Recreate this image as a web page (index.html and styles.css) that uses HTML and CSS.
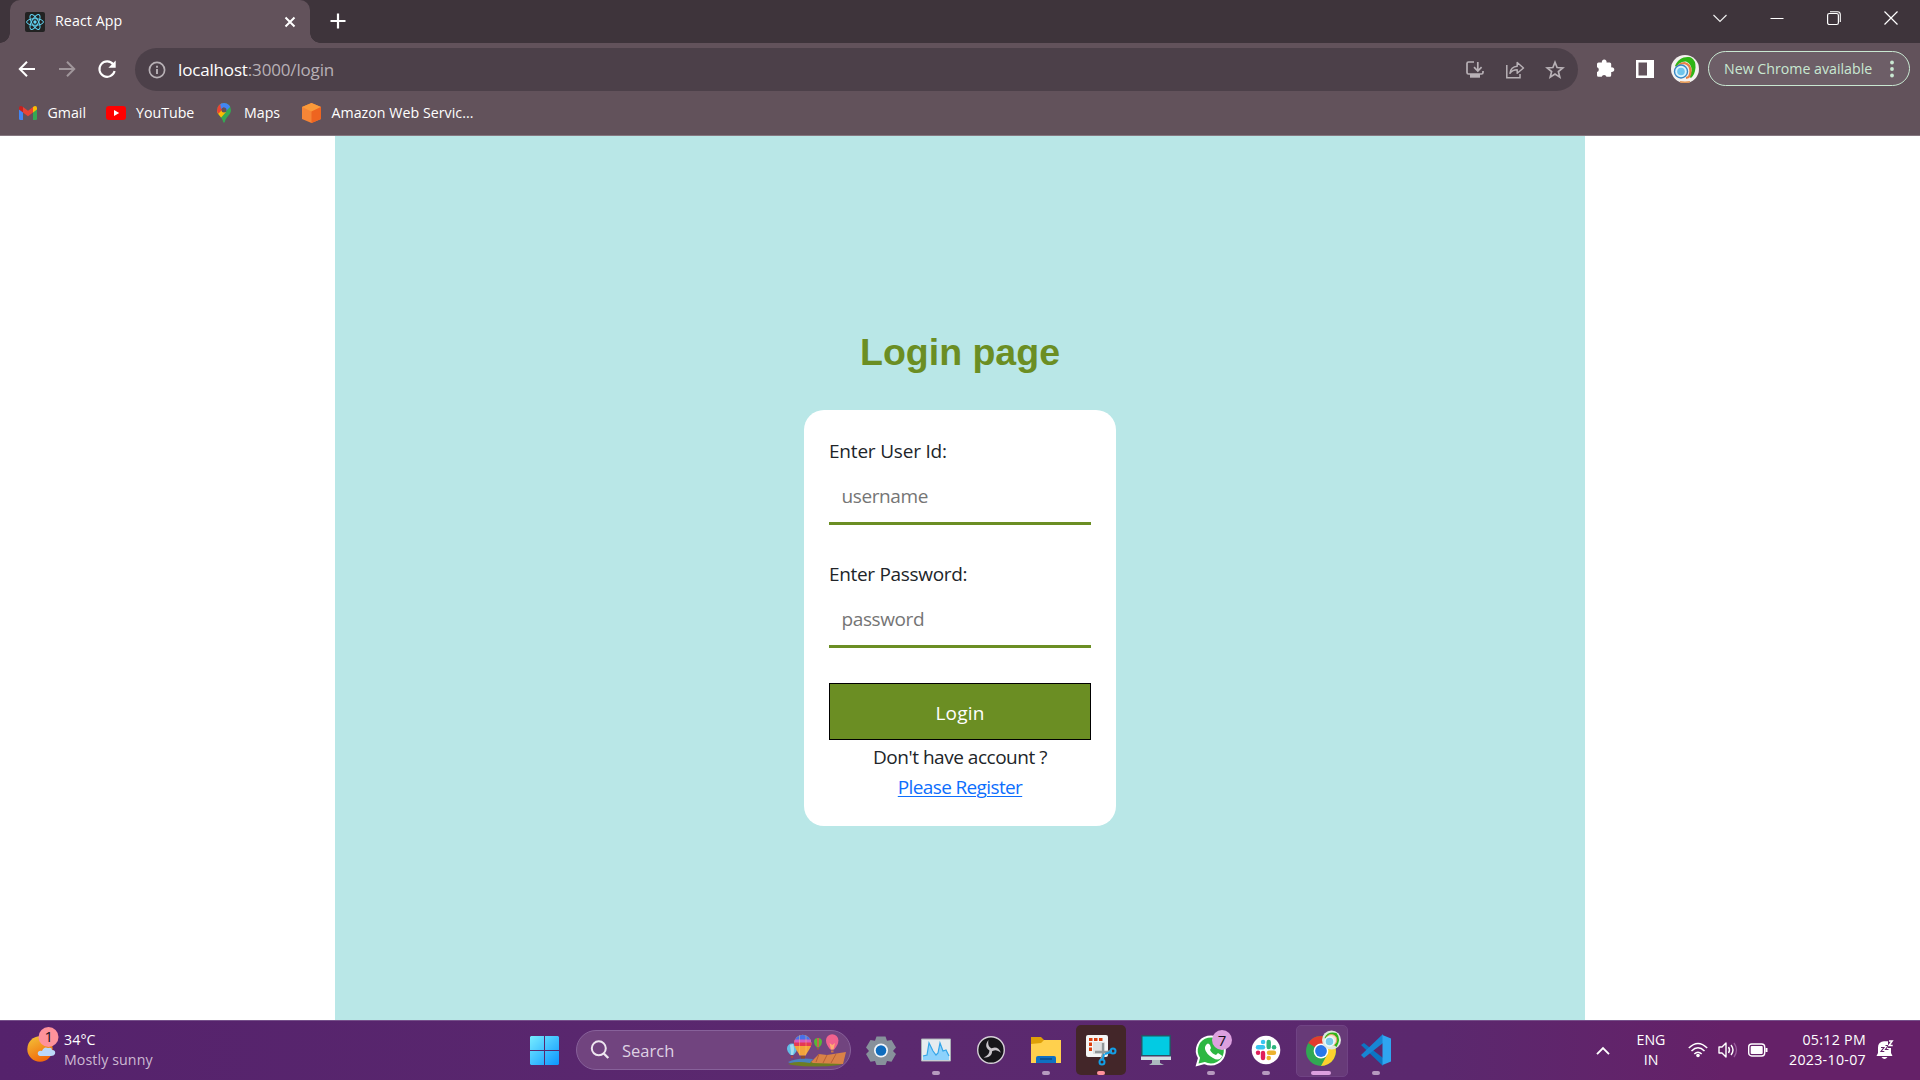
FILE: index.html
```html
<!DOCTYPE html>
<html lang="en">
<head>
<meta charset="utf-8">
<title>React App</title>
<link rel="stylesheet" href="styles.css">
</head>
<body>
<div class="screen">
  <header class="browser">
    <div class="tabstrip">
      <div class="tab">
        <svg class="favicon" width="20" height="20" viewBox="0 0 20 20"><rect width="20" height="20" rx="2" fill="#222"/><g fill="none" stroke="#5fd3f3" stroke-width="1"><ellipse cx="10" cy="10" rx="8.4" ry="3.3"/><ellipse cx="10" cy="10" rx="8.4" ry="3.3" transform="rotate(60 10 10)"/><ellipse cx="10" cy="10" rx="8.4" ry="3.3" transform="rotate(120 10 10)"/></g><circle cx="10" cy="10" r="1.7" fill="#5fd3f3"/></svg>
        <span class="tab-title">React App</span>
        <svg class="tab-close" width="12" height="12" viewBox="0 0 12 12"><path d="M1.5 1.5l9 9M10.500 1.500l-9 9" stroke="#fff" stroke-width="2"/></svg>
      </div>
      <svg class="new-tab" width="16" height="16" viewBox="0 0 16 16"><path d="M8 .5v15M.5 8h15" stroke="#fff" stroke-width="2.200"/></svg>
      <div class="window-controls">
        <svg width="14" height="14" viewBox="0 0 14 14"><path d="M.5 4l6.500 6.500L13.500 4" fill="none" stroke="#eee" stroke-width="1.200"/></svg>
        <svg width="14" height="14" viewBox="0 0 14 14"><path d="M.5 7.500h13" stroke="#fff"/></svg>
        <svg width="14" height="14" viewBox="0 0 14 14"><rect x=".6" y="2.500" width="10.800" height="11" rx="1.800" fill="none" stroke="#fff" stroke-width="1.200"/><path d="M3 .7h7.500a2.800 2.800 0 0 1 2.800 2.800V11" fill="none" stroke="#fff" stroke-width="1.100"/></svg>
        <svg width="14" height="14" viewBox="0 0 14 14"><path d="M.5.5l13 13M13.500.5l-13 13" stroke="#fff" stroke-width="1.200"/></svg>
      </div>
    </div>
    <div class="toolbar">
      <div class="nav">
        <svg width="20" height="20" viewBox="0 0 20 20"><path d="M18 10H3M10 2.800L2.800 10l7.200 7.200" fill="none" stroke="#fff" stroke-width="2"/></svg>
        <svg width="20" height="20" viewBox="0 0 20 20"><path d="M2 10h15M10 2.800l7.200 7.200-7.200 7.200" fill="none" stroke="#a0969b" stroke-width="2"/></svg>
        <svg width="20" height="20" viewBox="0 0 20 20"><path d="M16.300 5.500A7.700 7.700 0 1 0 17.600 12" fill="none" stroke="#fff" stroke-width="2.100"/><path d="M18.700 1.500v7.300h-7.300z" fill="#fff"/></svg>
      </div>
      <div class="omnibox">
        <svg width="18" height="18" viewBox="0 0 18 18"><circle cx="9" cy="9" r="7.600" fill="none" stroke="#b8b1b6" stroke-width="1.700"/><path d="M9 8v5M9 4.800v1.900" stroke="#b8b1b6" stroke-width="1.900"/></svg>
        <span class="url"><b>localhost</b>:3000/login</span>
        <div class="omni-actions">
          <svg width="20" height="20" viewBox="0 0 20 20"><path d="M9 2H3.500Q2 2 2 3.500v9Q2 14 3.500 14h13q1.500 0 1.500-1.500V11M12.800 2v8.500M9 7.200l3.800 3.800 3.800-3.800" fill="none" stroke="#b8b1b6" stroke-width="1.700"/><path d="M5 14h10v3.700H5z" fill="#b8b1b6"/></svg>
          <svg width="20" height="20" viewBox="0 0 20 20"><path d="M1.800 5v12.700H15V14" fill="none" stroke="#b8b1b6" stroke-width="1.500"/><path d="M5 13.300c.6-4.800 3.200-6.700 7.200-7V2.500L18.500 8l-6.300 5.300v-3.500c-3.200 0-5.400.9-7.200 3.500z" fill="none" stroke="#b8b1b6" stroke-width="1.500" stroke-linejoin="round"/></svg>
          <svg width="20" height="20" viewBox="0 0 20 20"><path d="M10 2.200l2.100 5.300 5.700.4-4.400 3.700 1.400 5.600-4.800-3.100-4.800 3.100 1.400-5.600L2.200 7.900l5.700-.4z" fill="none" stroke="#b8b1b6" stroke-width="1.700"/></svg>
        </div>
      </div>
      <div class="extensions">
        <svg width="20" height="20" viewBox="0 0 20 20"><path d="M2 5q0-1.500 1.500-1.500h3.400a2.400 2.400 0 1 1 4.600 0h3.200q1.500 0 1.500 1.500v3.400a2.400 2.400 0 1 1 0 4.600v3.300q0 1.500-1.500 1.500h-3.200a2.500 2.500 0 0 0-4.800 0H3.500Q2 17.800 2 16.300v-3.200a2.500 2.500 0 0 0 0-4.800z" fill="#fff"/></svg>
        <svg width="18" height="18" viewBox="0 0 18 18"><path d="M0 0h18v18H0zM2.500 2.500v13H11v-13z" fill="#fff" fill-rule="evenodd"/></svg>
        <svg width="28" height="28" viewBox="0 0 28 28"><circle cx="14" cy="14" r="14" fill="#f4f1ee"/><path d="M4 11C7 4 13 1 20 2.500q5 3 4.500 10T20 23z" fill="#2fb516"/><path d="M4 14q4-8 11-7.500 6 2.500 5.500 9.500L17 23z" fill="#eee"/><path d="M5 14q3-6 8.500-6 6 1.500 6 8T15 23" fill="none" stroke="#e98143" stroke-width="2.200"/><circle cx="10" cy="16.500" r="6.500" fill="#d9f3fc" stroke="#3887c4" stroke-width="1.400"/><circle cx="10" cy="16.500" r="3.800" fill="#6fc4ec"/><path d="M9 26.800q5 1 10 0" stroke="#e69a58" stroke-width="1.500" fill="none"/></svg>
      </div>
      <div class="update-pill"><span class="update-text">New Chrome available</span><svg width="4" height="18" viewBox="0 0 4 18"><g fill="#c9e8d2"><circle cx="2" cy="2.500" r="1.900"/><circle cx="2" cy="9" r="1.900"/><circle cx="2" cy="15.500" r="1.900"/></g></svg></div>
    </div>
    <div class="bookmarks">
      <div class="bookmark gmail"><svg width="18" height="14" viewBox="0 0 18 14"><path d="M0 3v9.500Q0 14 1.300 14H4V5.500z" fill="#4285f4"/><path d="M14 5.500V14h2.700q1.300 0 1.300-1.500V3z" fill="#34a853"/><path d="M4 1v5.500l5 3.800 5-3.800V1L9 4.800z" fill="#ea4335"/><path d="M0 2Q0 .2 1.800 0 2.800 0 4 1v5.500L0 3.500z" fill="#c5221f"/><path d="M14 1q1.200-1 2.200-1Q18 .2 18 2v1.500l-4 3z" fill="#fbbc04"/></svg><span>Gmail</span></div>
      <div class="bookmark youtube"><svg width="20" height="14" viewBox="0 0 20 14"><rect width="20" height="14" rx="3" fill="#f00"/><path d="M8 4l5.200 3L8 10z" fill="#fff"/></svg><span>YouTube</span></div>
      <div class="bookmark maps"><svg width="14" height="20" viewBox="0 0 14 20"><defs><clipPath id="pin"><path d="M7 0a7 7 0 0 1 7 7c0 5-5 6.500-6.200 12q-.8 1.500-1.600 0C5 13.500 0 12 0 7a7 7 0 0 1 7-7z"/></clipPath></defs><g clip-path="url(#pin)"><path d="M0 0h14v20H0z" fill="#34a853"/><path d="M0 14V7h5l4 2-7 8z" fill="#fbbc04"/><path d="M0 0h5l2 5-6 6H0z" fill="#ea4335"/><path d="M3 0h11v3L8 9 7 4 4 6z" fill="#4285f4"/></g><circle cx="7" cy="7" r="2.500" fill="#62525b"/></svg><span>Maps</span></div>
      <div class="bookmark aws"><svg width="19" height="20" viewBox="0 0 19 20"><path d="M9.500 0L19 4v12l-9.500 4L0 16V4z" fill="#f58536"/><path d="M9.500 0L19 4 9.500 8.500 0 4z" fill="#fa9a3a"/><path d="M9.500 8.500L19 4v12l-9.500 4z" fill="#ee6420"/></svg><span>Amazon Web Servic...</span></div>
    </div>
  </header>

  <main class="page">
    <section class="login">
      <h1 class="heading">Login page</h1>
      <form class="card">
        <label class="label user" for="user">Enter User Id:</label>
        <input class="field" id="user" type="text" placeholder="username">
        <label class="label" for="pass">Enter Password:</label>
        <input class="field" id="pass" type="password" placeholder="password">
        <button class="submit" type="button">Login</button>
        <p class="prompt">Don't have account ?</p>
        <p class="prompt register"><a href="#">Please Register</a></p>
      </form>
    </section>
  </main>

  <footer class="taskbar">
    <div class="weather">
      <svg width="34" height="38" viewBox="0 0 34 38"><defs><linearGradient id="sun" x2=".5" y2="1"><stop stop-color="#f3c53a"/><stop offset="1" stop-color="#f26a0b"/></linearGradient></defs><circle cx="13" cy="23" r="12.700" fill="url(#sun)"/><path d="M13 30q-3-1-2-4 2-2 4-1 2-5 6-3 4-1 4 2 4 0 3 4-1 2-4 2z" fill="#bcd8f8"/><circle cx="21.500" cy="11" r="10" fill="#ff929b"/><text x="21.700" y="16" text-anchor="middle" class="badge">1</text></svg>
      <div class="weather-text"><span class="temp">34°C</span><span class="sky">Mostly sunny</span></div>
    </div>
    <svg class="start" width="29" height="29" viewBox="0 0 29 29"><defs><linearGradient id="win" x2="1" y2="1"><stop stop-color="#77edff"/><stop offset="1" stop-color="#0b96ff"/></linearGradient></defs><path d="M1 0h13v14H0V1zM15 0h13l1 1v13H15zM0 15h14v14H1l-1-1zM15 15h14v13l-1 1H15z" fill="url(#win)"/></svg>
    <div class="search">
      <svg width="20" height="20" viewBox="0 0 20 20"><circle cx="8.800" cy="8.300" r="7" fill="none" stroke="#eee6f0" stroke-width="2"/><path d="M13.800 13.500l4.500 4.500" stroke="#eee6f0" stroke-width="2.400"/></svg>
      <span class="search-text">Search</span>
      <svg class="balloons" width="60" height="33" viewBox="0 0 60 33"><path d="M1 30q10-4 22-3l34 1-4 3q-26 3-48 0z" fill="#6e7d22"/><path d="M1 28q10-5 25-3l-3 4q-12-2-20 0z" fill="#4a83be"/><path d="M24 28l8-8 8 1 19-3-3 12-30-1z" fill="#d98247"/><path d="M32 20l-3 8M40 21l-4 8M49 20l-5 9" stroke="#b75f35"/><path d="M0 14.500a5 5 0 0 1 10 0q0 3-3.500 6.500h-3Q0 17.500 0 14.500z" fill="#62bde6"/><path d="M3 11q1 6 1 10h2q2-6 0-11z" fill="#a5ddef"/><path d="M4 22h2v2H4z" fill="#a44"/><clipPath id="big"><path d="M7 9.500a8.700 8.700 0 0 1 17.400 0c0 4-3.400 7.500-5.700 12h-6C10.400 17 7 13.500 7 9.500z"/></clipPath><g clip-path="url(#big)"><path d="M7 0h18v22H7z" fill="#f3a43c"/><path d="M7 0h18v6H7z" fill="#4970ea"/><path d="M7 5.500h18v3.500H7z" fill="#d85ac0"/><path d="M7 8.500h18V12H7z" fill="#e63954"/><path d="M12.500 0v22M19 0v22" stroke="#ffd56b" opacity=".4"/></g><path d="M14 22h4v2.500h-4z" fill="#8b4b2c"/><path d="M27 8a4 4 0 0 1 8 0q0 3-3 5.500h-2Q27 11 27 8z" fill="#55b836"/><path d="M31 4v9" stroke="#e84b55" stroke-width="1.500"/><path d="M30 14h2v1.500h-2z" fill="#9b5a35"/><path d="M39 6.500a6.200 6.200 0 0 1 12.400 0q0 4-4.200 9h-4q-4.200-5-4.200-9z" fill="#f1628e"/><path d="M42.500 9l1.500 6.500h2.500L48 9l-2.700 2z" fill="#ffab73"/><path d="M44 16.500h2.500v2H44z" fill="#ca774a"/></svg>
    </div>
    <div class="apps">
      <div class="app"><svg width="32" height="32" viewBox="0 0 32 32"><path d="M11.500 2.500h9l1.500 4.200 4.500-.8 4.500 7.600-3 3.500 3 3-4.500 7.700-4.500-.8-1.500 4.100h-9L10 27l-4.500.7L1 20l3-3-3-3.500 4.500-7.600 4.500.8z" fill="#87919b"/><circle cx="16" cy="16.500" r="7" fill="#f1f5fa"/><circle cx="16" cy="16.500" r="5.300" fill="#0f6cbd"/></svg></div>
      <div class="app running"><svg width="32" height="32" viewBox="0 0 32 32"><path d="M1.500 5h29v22h-29z" fill="#e7ecef" stroke="#a9afb4"/><path d="M3 26v-4l4-1 2-12 4 8 3 4 2-2 2-10 3 8 3-1 3 6v4z" fill="#8dd2fc"/><path d="M3 22l4-1 2-12 4 8 3 4 2-2 2-10 3 8 3-1 3 6" fill="none" stroke="#34a5e8" stroke-width="1.200"/></svg></div>
      <div class="app"><svg width="32" height="32" viewBox="0 0 32 32"><circle cx="16" cy="16" r="13.300" fill="#17161a" stroke="#d6d0d8" stroke-width="1.400"/><g fill="#c9c5ca"><path d="M16 17C11 15.500 9.500 10.500 13.500 6 12.500 10.500 14 13.500 17.500 15z"/><path d="M16 17C11 15.500 9.500 10.500 13.500 6 12.500 10.500 14 13.500 17.500 15z" transform="rotate(120 16 16)"/><path d="M16 17C11 15.500 9.500 10.500 13.500 6 12.500 10.500 14 13.500 17.500 15z" transform="rotate(240 16 16)"/></g></svg></div>
      <div class="app running"><svg width="32" height="32" viewBox="0 0 32 32"><path d="M1 3h10l3 3v5H1z" fill="#dfa007"/><path d="M1 10l10-1 3-3h17v23H1z" fill="#ffd04d"/><path d="M6 29v-5q0-2 2-2h16q2 0 2 2v5z" fill="#0f70c2"/><path d="M10 25h12" stroke="#084a87" stroke-width="1.500"/></svg></div>
      <div class="app running snip"><svg width="32" height="32" viewBox="0 0 32 32"><rect x="1" y="1" width="22" height="22" rx="2" fill="#f5f6f6"/><path d="M5.500 17V5.500H18" fill="none" stroke="#da3f0e" stroke-width="3" stroke-dasharray="3.500 1.500"/><path d="M8 8h12v12H8z" fill="#dfe1e1"/><path d="M18 9v11l-2 6M10 18h12l5-1" stroke="#92989a" stroke-width="2.300" fill="none"/><circle cx="28" cy="17" r="2.500" fill="none" stroke="#129fe6" stroke-width="2"/><circle cx="17" cy="28" r="2.500" fill="none" stroke="#129fe6" stroke-width="2"/><path d="M20 20l6-2M19 20l-1 5" stroke="#129fe6" stroke-width="2"/></svg></div>
      <div class="app"><svg width="32" height="32" viewBox="0 0 32 32"><path d="M1 1h30v21H1z" fill="#2a5265"/><path d="M2.500 2.500h27V21h-27z" fill="#02cbe3"/><path d="M1 22.500h30V26H1z" fill="#d4dfe3"/><path d="M12 26h8v3l4 2H9l3-2z" fill="#acb9bf"/></svg></div>
      <div class="app running"><svg width="32" height="38" viewBox="0 0 32 38"><path d="M2 34l2-7A14 14 0 1 1 9.500 32z" fill="#2db742" stroke="#fff" stroke-width="2"/><path d="M11 14q2-3 4 0l1 3-1 2q2 4 6 5l2-2 3 2q2 1 0 3-3 3-8 0-7-4-8-9-.5-2 1-4z" fill="#fff"/><circle cx="27" cy="9" r="10" fill="#dda0df"/><text class="badge" x="27" y="14.500" text-anchor="middle">7</text></svg></div>
      <div class="app running"><svg width="32" height="32" viewBox="0 0 32 32"><circle cx="16" cy="16" r="14.300" fill="#fff"/><g stroke-width="4.400" stroke-linecap="round"><path d="M8 13.300h5" stroke="#36c5f0"/><path d="M13 8h.1" stroke="#36c5f0"/><path d="M18.700 8v5" stroke="#2eb67d"/><path d="M24 13.300h.1" stroke="#2eb67d"/><path d="M19 18.800h5" stroke="#ecb22e"/><path d="M18.700 24h.1" stroke="#ecb22e"/><path d="M13 19v5" stroke="#e01e5a"/><path d="M8 18.800h.1" stroke="#e01e5a"/></g></svg></div>
      <div class="app running active"><svg width="32" height="40" viewBox="0 0 32 40"><circle cx="16" cy="21" r="15" fill="#31a853"/><path d="M16 21L3.300 13A15 15 0 0 1 29.500 14.500H16z" fill="#e33b2e"/><path d="M16 14.500h13.500A15 15 0 0 1 16 36l6.500-12z" fill="#fdd12f"/><circle cx="16" cy="21" r="7.400" fill="#fff"/><circle cx="16" cy="21" r="5.900" fill="#2877ea"/><circle cx="26.500" cy="10" r="9.500" fill="#dfe7dd"/><path d="M19.500 8q3-7 12-5 5 6 0 14z" fill="#2fb516"/><circle cx="26.300" cy="10" r="5.500" fill="#f4e5d0" stroke="#e9a06b"/><circle cx="24.500" cy="11.500" r="4.500" fill="#78c8e9" stroke="#e6faff" stroke-width="1.500"/></svg></div>
      <div class="app running"><svg width="32" height="32" viewBox="0 0 32 32"><path d="M1 11l3-2 19 15v8z" fill="#0b75c3"/><path d="M1 21l3 3L23 9V0z" fill="#1686d5"/><path d="M22.500 1L31 4.500v23L22.500 31z" fill="#2fa5f0"/></svg></div>
    </div>
    <div class="tray">
      <svg class="expand" width="14" height="10" viewBox="0 0 14 10"><path d="M1 8.200l6-6 6 6" fill="none" stroke="#fff" stroke-width="1.900"/></svg>
      <div class="lang"><span>ENG</span><span>IN</span></div>
      <svg class="wifi" width="20" height="18" viewBox="0 0 20 18"><g fill="none" stroke="#fff" stroke-width="1.500"><path d="M.8 7q9.200-9 18.400 0M3.500 10q6.500-6.500 13 0M6.300 13q3.700-3.600 7.400 0"/></g><circle cx="10" cy="14.500" r="1.800" fill="#fff"/></svg>
      <svg class="sound" width="20" height="18" viewBox="0 0 20 18"><path d="M1 6h3l4-4v14l-4-4H1z" fill="none" stroke="#fff" stroke-width="1.400" stroke-linejoin="round"/><path d="M10.500 6q2 3 0 6M13 4q4 5 0 10" fill="none" stroke="#fff" stroke-width="1.400"/><path d="M16 2q5 7 0 14" fill="none" stroke="#985a9a" stroke-width="1.300"/></svg>
      <svg class="battery" width="20" height="14" viewBox="0 0 20 14"><rect x=".7" y="1" width="16" height="12" rx="3" fill="none" stroke="#fff" stroke-width="1.400"/><rect x="2.700" y="3" width="12" height="8" rx="1" fill="#fff"/><path d="M18.500 5v4" stroke="#fff" stroke-width="2"/></svg>
      <div class="clock"><span>05:12 PM</span><span>2023-10-07</span></div>
      <svg class="bell" width="18" height="20" viewBox="0 0 18 20"><path d="M2 13V7.500a6 6 0 0 1 6-6.300h4V8h3v5l1.500 3H.5z" fill="#fff"/><path d="M5.500 17h6q-3 4-6 0z" fill="#fff"/><path d="M5 7.500h3l-3 4h3.300M9.500 5.500h2.800l-2.800 4h3" fill="none" stroke="#632268" stroke-width="1.100"/><path d="M13 1h3.200L13 5.500h3.700" fill="none" stroke="#fff" stroke-width="1.500"/></svg>
    </div>
  </footer>
</div>
</body>
</html>
```
FILE: styles.css
```css
* { box-sizing: border-box; }
body { margin: 0; background: #fff; font-family: "Open Sans", "Noto Sans", sans-serif; }
svg { display: block; flex: none; overflow: visible; }
.screen { width: 1920px; height: 1080px; display: flex; flex-direction: column; overflow: hidden; }

/* Browser chrome */
.browser { height: 136px; background: #62525b; border-bottom: 1px solid #857780; color: #fff; font-size: 14.2px; white-space: nowrap; }
.tabstrip { height: 43px; background: #3e343b; display: flex; padding-left: 10px; }
.tab { width: 300px; height: 43px; background: #62525b; border-radius: 10px 10px 0 0; display: flex; align-items: center; padding: 0 14px 0 15px; position: relative; }
.tab::before, .tab::after { content: ""; position: absolute; bottom: 0; width: 10px; height: 10px; }
.tab::before { left: -10px; background: radial-gradient(circle at 0 0, #3e343b 9.500px, #62525b 10px); }
.tab::after { right: -10px; background: radial-gradient(circle at 100% 0, #3e343b 9.500px, #62525b 10px); }
.tab-title { margin: -2px 0 0 10px; letter-spacing: .1px; line-height: 20px; }
.tab-close { margin-left: auto; }
.new-tab { margin: 13px 0 0 19.500px; }
.window-controls { margin-left: auto; display: flex; gap: 43px; padding: 11px 22px 0 0; }
.toolbar { height: 53px; display: flex; padding-top: 5px; }
.nav { width: 135px; display: flex; gap: 20px; padding: 11px 0 0 17px; }
.omnibox { width: 1443px; height: 43px; border-radius: 22px; background: #4c4049; display: flex; align-items: center; padding: 0 13px; }
.url { margin-left: 12px; font-size: 17px; line-height: 24px; letter-spacing: -.16px; color: #b8b1b6; }
.url b { font-weight: 400; color: #fff; }
.omni-actions { margin-left: auto; display: flex; gap: 20px; }
.extensions { width: 130px; height: 42px; padding-left: 17px; display: flex; align-items: center; }
.extensions svg:nth-child(2) { margin-left: 21px; }
.extensions svg:nth-child(3) { margin-left: 17px; }
.update-pill { width: 202px; height: 35px; margin-top: 3px; border: 1.500px solid #c9e8d2; border-radius: 18px; background: #6d5e67; color: #c9e8d2; display: flex; align-items: center; justify-content: space-between; padding: 0 15px; }
.bookmarks { display: flex; align-items: center; height: 34px; padding-left: 19px; }
.bookmark { display: flex; align-items: center; gap: 11px; line-height: 20px; }
.gmail { width: 87px; gap: 10.500px; }
.youtube { width: 111px; gap: 10px; }
.maps { width: 84.500px; gap: 13px; }
.aws { letter-spacing: .04px; }

/* Web page */
.page { height: 884px; display: flex; justify-content: center; }
.login { width: 1250px; background: #b9e7e7; display: flex; flex-direction: column; align-items: center; padding-top: 194px; }
.heading { margin: 0 0 35px; font: bold 37.500px/45px "Liberation Sans", Arial, sans-serif; color: #6b8e23; }
.card { width: 312px; height: 416px; border-radius: 20px; background: #fff; padding: 26px 25px 24px; display: flex; flex-direction: column; color: #212529; font-size: 19px; line-height: 30px; letter-spacing: -.32px; }
.user { letter-spacing: -.2px; }
.field { width: 100%; height: 59px; margin: 0 0 34px; border: 0; border-bottom: 3px solid #6b8e23; padding: 15px 12.500px 11px; font: inherit; letter-spacing: -.4px; background: none; outline: 0; }
.field::placeholder { color: #757575; opacity: 1; }
.submit { height: 57px; margin: 1px 0 2px; padding: 2px 0 0; border: 1px solid #000; background: #6b8e23; color: #fff; font: inherit; letter-spacing: .2px; }
.prompt { margin: 0; text-align: center; letter-spacing: -.48px; }
.register { letter-spacing: -.63px; }
.prompt a { color: #0d6efd; text-underline-offset: 2px; text-decoration-thickness: 1px; }

/* Taskbar */
.taskbar { height: 60px; background: linear-gradient(90deg, #55226c, #5b296f 45%, #5b286e 75%, #652168 90%); border-top: 1px solid #76508a; color: #fff; font-size: 14.2px; line-height: 20px; display: flex; white-space: nowrap; }
.badge { font: 15px "Open Sans", sans-serif; fill: #16101a; }
.weather { width: 530px; padding-left: 27px; display: flex; }
.weather > svg { margin-top: 5px; }
.weather-text { display: flex; flex-direction: column; margin: 9px 0 0 3px; letter-spacing: .1px; }
.sky { color: #ccb9d2; }
.start { margin-top: 15px; }
.search { width: 275px; height: 40px; margin: 9px 2.500px 0 17px; border: 1px solid #87619a; border-radius: 20px; background: #71447f; display: flex; align-items: center; padding: 0 3px 0 13px; }
.search-text { font-size: 16.500px; margin: 1px 0 0 12px; color: #dfd2e3; }
.balloons { margin-left: auto; }
.apps { display: flex; }
.app { width: 55px; height: 59px; padding-bottom: 2px; display: flex; justify-content: center; align-items: center; position: relative; }
.app svg { z-index: 1; }
.running::after { content: ""; position: absolute; z-index: 1; bottom: 5px; width: 8px; height: 4px; border-radius: 2px; background: #b69abf; }
.snip::before, .active::before { content: ""; position: absolute; top: 4px; left: 2.500px; width: 50px; height: 50px; border-radius: 5px; background: #432629; }
.snip::after { background: #ff929b; }
.active::before { background: #673a78; border: 1px solid #704384; }
.active::after { width: 20px; background: #dda0df; }
.tray { margin-left: auto; display: flex; padding-right: 26px; }
.expand { margin-top: 25px; }
.lang { width: 40px; margin: 9px 0 0 21px; display: flex; flex-direction: column; align-items: center; }
.wifi { margin: 20px 0 0 17px; }
.sound { margin: 20px 0 0 10px; }
.battery { margin: 22px 0 0 10px; }
.clock { width: 98px; margin: 9px 0 0; display: flex; flex-direction: column; align-items: flex-end; letter-spacing: .3px; }
.bell { margin: 19px 0 0 10px; }
```
